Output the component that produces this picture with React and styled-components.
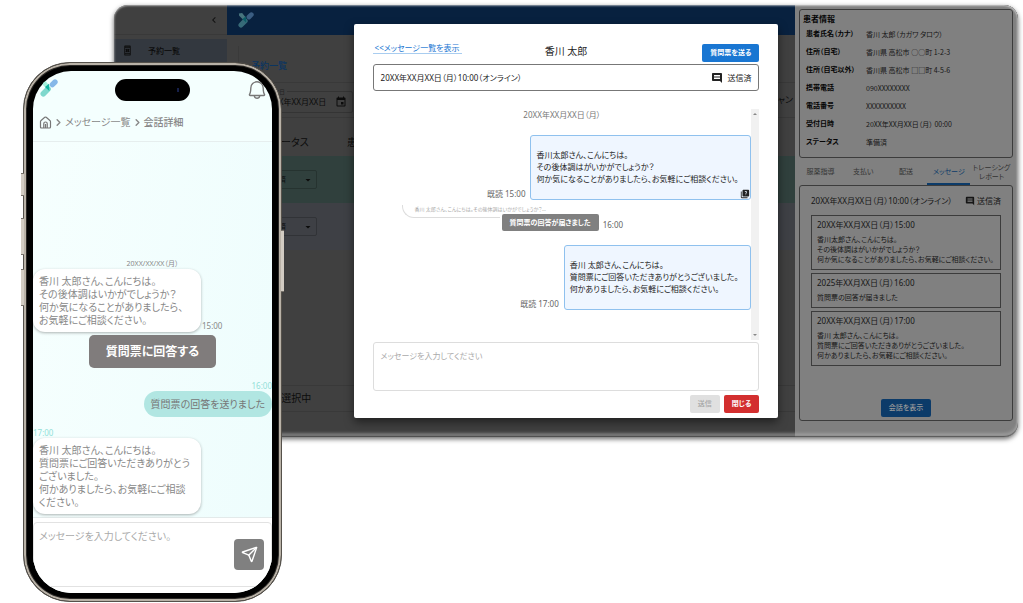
import React, { useState } from 'react'
import styled, { createGlobalStyle } from 'styled-components';
import { MdComment, MdQuiz, MdEvent, MdChevronLeft, MdOutlineBookOnline, MdArrowDropDown } from 'react-icons/md';
import { LuSend, LuChevronRight } from 'react-icons/lu';
import { PiBell } from 'react-icons/pi';


const patient = [
  ['患者氏名（カナ）', '香川 太郎（カガワ タロウ）'],
  ['住所（自宅）', '香川県 高松市 ○○町 1-2-3'],
  ['住所（自宅以外）', '香川県 高松市 □□町 4-5-6'],
  ['携帯電話', '090XXXXXXXX'],
  ['電話番号', 'XXXXXXXXXX'],
  ['受付日時', '20XX年XX月XX日（月） 00:00'],
  ['ステータス', '準備済'],
];

const tabs = ['服薬指導', '支払い', '配送', 'メッセージ', 'トレーシング レポート'];

const history = [
  {
    date: '20XX年XX月XX日（月）15:00',
    lines: ['香川太郎さん、こんにちは。', 'その後体調はがいかがでしょうか？', '何か気になることがありましたら、お気軽にご相談ください。'],
  },
  {
    date: '2025年XX月XX日（月）16:00',
    lines: ['質問票の回答が届きました'],
  },
  {
    date: '20XX年XX月XX日（月）17:00',
    lines: ['香川 太郎さん、こんにちは。', '質問票にご回答いただきありがとうございました。', '何かありましたら、お気軽にご相談ください。'],
  },
];

const Lines = ({ items }) => items.map((line) => <p key={line}>{line}</p>);

const Logo = ({ size, dim }) => (
  <svg width={size} height={size} viewBox="0 0 54 54" opacity={dim ? 0.4 : 1} aria-hidden="true">
    <path d="M3 5 L14 3 L27 19 L20 29 L4 13 Z" fill="#a5f0dc" />
    <path d="M10 44 L24 30" stroke="#7fd8cd" strokeWidth="17" strokeLinecap="round" />
    <path d="M37 17 L45 9" stroke="#86b8e8" strokeWidth="16" strokeLinecap="round" />
    <path d="M15 24 L27 14 L28 36 Z" fill="#12b5a0" />
  </svg>
);

const HomeIcon = () => (
  <svg width="13" height="13" viewBox="0 0 26 26" fill="none" stroke="#777" strokeWidth="2.4" strokeLinejoin="round" aria-hidden="true">
    <path d="M3 11.5 Q3 10 4.2 9 L11.6 2.6 Q13 1.5 14.4 2.6 L21.8 9 Q23 10 23 11.5 V22 Q23 24 21 24 H5 Q3 24 3 22 Z" />
    <path d="M9.5 24 V15.5 Q9.5 12 13 12 Q16.5 12 16.5 15.5 V24 M13 16 V24" />
  </svg>
);

const PatientPanel = () => {
  const [tab, setTab] = useState('メッセージ');

  return (
    <Panel>
      <InfoCard>
        <h2>患者情報</h2>
        <dl>
          {patient.map(([label, value]) => (
            <InfoRow key={label}>
              <dt>{label}</dt>
              <dd>{value}</dd>
            </InfoRow>
          ))}
        </dl>
      </InfoCard>
      <Tabs>
        {tabs.map((name) => (
          <Tab key={name} type="button" $active={name === tab} onClick={() => setTab(name)}>{name}</Tab>
        ))}
      </Tabs>
      <HistoryCard>
        <HistoryHead>
          <span>20XX年XX月XX日（月）10:00（オンライン）</span>
          <Sent><MdComment size={10} />送信済</Sent>
        </HistoryHead>
        {history.map((item) => (
          <HistoryItem key={item.date}>
            <h3>{item.date}</h3>
            <Lines items={item.lines} />
          </HistoryItem>
        ))}
        <ShowButton type="button">会話を表示</ShowButton>
      </HistoryCard>
    </Panel>
  );
};

const Reservations = () => (
  <Main>
    <TopBar><Logo size={16} dim /></TopBar>
    <Card>
      <Heading>予約一覧</Heading>
      <Filters>
        <DateField>
          <legend>予約日</legend>
          <span>20XX年XX月XX日</span>
          <MdEvent size={12} />
        </DateField>
        <label><input type="checkbox" />キャン</label>
      </Filters>
      <Table>
        <thead>
          <tr><th>ステータス</th><th>患者名</th></tr>
        </thead>
        <tbody>
          {['#30403d', '#3e4045'].map((color) => (
            <Row key={color} $color={color}>
              <td>
                <SelectBox>
                  <select aria-label="ステータス" defaultValue="準備済">
                    <option>準備済</option>
                    <option>未対応</option>
                  </select>
                  <MdArrowDropDown size={12} />
                </SelectBox>
              </td>
              <td />
            </Row>
          ))}
        </tbody>
      </Table>
      <Selection>0件 選択中</Selection>
    </Card>
  </Main>
);

const MessageDialog = () => {
  const [text, setText] = useState('');

  return (
    <Backdrop>
      <Dialog role="dialog" aria-label="香川 太郎">
        <DialogHead>
          <a href="#messages">&lt;&lt;メッセージ一覧を表示</a>
          <h1>香川 太郎</h1>
          <Button type="button" $color="#1976d2">質問票を送る</Button>
        </DialogHead>
        <Visit>
          <span>20XX年XX月XX日（月）10:00（オンライン）</span>
          <Sent $wide><MdComment size={12} />送信済</Sent>
        </Visit>
        <Thread>
          <Messages>
            <Day>20XX年XX月XX日（月）</Day>
            <Outgoing>
              <time>既読 15:00</time>
              <Message>
                <Lines items={history[0].lines} />
                <MdQuiz size={10} />
              </Message>
            </Outgoing>
            <Reply>
              <Preview>香川 太郎さん、こんにちは。その後体調はいかがでしょうか？...</Preview>
              <Answer type="button">質問票の回答が届きました</Answer>
              <time>16:00</time>
            </Reply>
            <Outgoing>
              <time>既読 17:00</time>
              <Message><Lines items={history[2].lines} /></Message>
            </Outgoing>
          </Messages>
          <Scrollbar aria-hidden="true"><i /><i /></Scrollbar>
        </Thread>
        <Draft
          aria-label="メッセージ"
          placeholder="メッセージを入力してください"
          value={text}
          onChange={(e) => setText(e.target.value)}
        />
        <Actions>
          <Button type="button" disabled={!text} $color="#1976d2">送信</Button>
          <Button type="button" $color="#d32f2f">閉じる</Button>
        </Actions>
      </Dialog>
    </Backdrop>
  );
};

const PhoneApp = () => (
  <Phone>
    <SideKey $side="left" $top={110} $height={23} />
    <SideKey $side="left" $top={155} $height={37} />
    <SideKey $side="left" $top={206} $height={37} />
    <SideKey $side="right" $top={167} $height={62} />
    <Screen>
      <PhoneTop>
        <Logo size={18} />
        <Island><i /></Island>
        <button type="button" aria-label="通知"><PiBell size={22} /></button>
      </PhoneTop>
      <Crumbs>
        <a href="#home" aria-label="ホーム"><HomeIcon /></a>
        <LuChevronRight size={11} strokeWidth={3} />
        <a href="#messages">メッセージ一覧</a>
        <LuChevronRight size={11} strokeWidth={3} />
        <b>会話詳細</b>
      </Crumbs>
      <Chat>
        <ChatDay>20XX/XX/XX（月）</ChatDay>
        <Incoming>
          <Bubble>
            <Lines items={['香川 太郎さん、こんにちは。', 'その後体調はいかがでしょうか？', '何か気になることがありましたら、', 'お気軽にご相談ください。']} />
          </Bubble>
          <time>15:00</time>
        </Incoming>
        <AnswerButton type="button">質問票に回答する</AnswerButton>
        <Mine>
          <Stamp>16:00</Stamp>
          <Pill>質問票の回答を送りました</Pill>
        </Mine>
        <Stamp>17:00</Stamp>
        <Incoming>
          <Bubble>
            <Lines items={['香川 太郎さん、こんにちは。', '質問票にご回答いただきありがとう', 'ございました。', '何かありましたら、お気軽にご相談', 'ください。']} />
          </Bubble>
        </Incoming>
      </Chat>
      <Composer>
        <ComposerBox>
          <textarea aria-label="メッセージ" placeholder="メッセージを入力してください。" />
          <button type="button" aria-label="送信"><LuSend size={17} /></button>
        </ComposerBox>
      </Composer>
    </Screen>
  </Phone>
);

const App = () => (
  <Stage>
    <GlobalStyle />
    <Desktop>
      <Sidebar>
        <Collapse type="button" aria-label="閉じる"><MdChevronLeft size={12} /></Collapse>
        <a href="#reservations"><MdOutlineBookOnline size={11} />予約一覧</a>
      </Sidebar>
      <Reservations />
      <PatientPanel />
      <MessageDialog />
    </Desktop>
    <PhoneApp />
  </Stage>
);

export default App


const GlobalStyle = createGlobalStyle`
  * {
    box-sizing: border-box;
  }

  body {
    margin: 0;
    background: #fff;
    font-family: "Noto Sans", "Noto Sans CJK JP", sans-serif;
    font-feature-settings: "palt";
    font-size: 8px;
    line-height: 12px;
    color: #222;
  }

  h1, h2, h3, p, dl, dd {
    margin: 0;
  }

  button, input, select, textarea {
    font: inherit;
    font-feature-settings: inherit;
    margin: 0;
    padding: 0;
  }

  svg {
    flex: none;
  }
`;

/* the phone and the desktop window share one grid row and overlap */
const Stage = styled.div`
  display: grid;
  grid-template-columns: 91px 168px 1fr;
  align-items: start;
  padding: 5px 5px 0 23px;
`;

const Desktop = styled.div`
  position: relative;
  grid-column: 2 / 4;
  grid-row: 1;
  display: grid;
  grid-template-columns: 113px 1fr 223px;
  border-radius: 14px;
  overflow: hidden;
  background: #404040;
  box-shadow: 0 2px 5px rgba(0, 0, 0, 0.6);

  &::after {
    content: '';
    position: absolute;
    inset: 0;
    border-radius: 14px;
    pointer-events: none;
    box-shadow: inset 0 1px 2px rgba(255, 255, 255, 0.5), inset 0 -1px 1px rgba(30, 30, 30, 0.6),
      inset 0 -4px 3px rgba(180, 180, 180, 0.5), inset -1px 0 2px rgba(220, 220, 220, 0.5);
  }
`;

const Sidebar = styled.nav`
  display: flex;
  flex-direction: column;

  a {
    display: flex;
    align-items: center;
    gap: 15px;
    height: 23px;
    padding-left: 8px;
    background: #33383f;
    color: #0c0c0c;
    font-weight: 500;
    text-decoration: none;
  }
`;

const Collapse = styled.button`
  display: flex;
  align-items: center;
  justify-content: flex-end;
  height: 30px;
  margin-bottom: 4px;
  padding-right: 7px;
  border: none;
  border-bottom: 1px solid #393939;
  background: none;
  color: #111;
`;

const Main = styled.main`
  display: flex;
  flex-direction: column;
  min-width: 0;
  overflow: hidden;
  color: #0c0c0c;
`;

const TopBar = styled.header`
  display: flex;
  align-items: center;
  height: 30px;
  padding-left: 11px;
  background: #08213f;
`;

const Card = styled.section`
  display: flex;
  flex-direction: column;
  flex: 1;
  margin: 11px 0 0 11px;
  border-left: 1px solid #3a3a3a;
`;

const Heading = styled.h2`
  height: 37px;
  padding: 0 12px;
  border-bottom: 1px solid #393939;
  color: #0b3561;
  font-size: 9px;
  font-weight: 500;
  line-height: 40px;
`;

const Filters = styled.div`
  display: flex;
  align-items: center;
  justify-content: space-between;
  height: 35px;
  padding-left: 16px;
  border-bottom: 1px solid #393939;
  white-space: nowrap;

  label {
    display: flex;
    align-items: center;
    gap: 4px;
    padding-right: 2px;
    font-size: 9px;
  }
`;

const DateField = styled.fieldset`
  display: flex;
  align-items: center;
  justify-content: space-between;
  width: 98px;
  margin: 0;
  padding: 0 5px 4px 9px;
  border: 1px solid #343434;
  border-radius: 2px;

  legend {
    padding: 0 2px;
    color: #222;
    font-size: 6px;
    line-height: 8px;
  }
`;

const Table = styled.table`
  width: 100%;
  border-collapse: collapse;
  table-layout: fixed;

  th {
    height: 38px;
    padding: 10px 0 0;
    padding-left: 24px;
    font-size: 10px;
    font-weight: 400;
    text-align: left;
  }

  th:first-child {
    width: 84px;
  }

  td {
    height: 47px;
    padding: 0 0 0 20px;
  }
`;

const Row = styled.tr`
  background: ${(props) => props.$color};
`;

const SelectBox = styled.div`
  display: flex;
  align-items: center;
  width: 58px;
  height: 19px;
  padding: 0 2px 0 5px;
  border: 1px solid rgba(0, 0, 0, 0.2);
  border-radius: 2px;

  select {
    flex: 1;
    min-width: 0;
    border: none;
    background: none;
    color: #0c0c0c;
    appearance: none;
    font-size: 7px;
  }
`;

const Selection = styled.div`
  margin-top: auto;
  margin-bottom: 25px;
  padding-left: 24px;
  border: solid #393939;
  border-width: 1px 0;
  font-size: 10px;
  line-height: 25px;
`;

const Panel = styled.aside`
  padding: 4px 5px 16px 4px;
  background: #808080;
  color: #161616;
`;

const InfoCard = styled.section`
  padding: 3px;
  border: 1px solid #3c3c3c;
  border-radius: 3px;

  h2 {
    font-size: 8px;
    line-height: 12px;
    color: #050505;
  }

  dl {
    padding: 0 3px 3px;
  }
`;

const InfoRow = styled.div`
  display: grid;
  grid-template-columns: 60px 1fr;
  font-size: 7px;
  line-height: 18px;

  dt {
    font-weight: 700;
    color: #050505;
  }

  dd {
    font-family: "Noto Sans CJK JP", "Noto Sans", sans-serif;
  }
`;

const Tabs = styled.div`
  display: flex;
  height: 27px;
  padding-top: 2px;
`;

const Tab = styled.button`
  flex: 1 1 0;
  min-width: 0;
  border: none;
  border-bottom: 2px solid ${(props) => (props.$active ? '#0c3b69' : 'transparent')};
  background: none;
  color: ${(props) => (props.$active ? '#0c3b69' : '#333')};
  font-size: 7px;
  line-height: 9px;
`;

const HistoryCard = styled.section`
  display: flex;
  flex-direction: column;
  gap: 3px;
  padding: 9px 11px 3px;
  border: 1px solid #3c3c3c;
  border-radius: 3px;
`;

const HistoryHead = styled.div`
  display: flex;
  justify-content: space-between;
  margin-bottom: 5px;
  white-space: nowrap;
`;

const Sent = styled.span`
  display: flex;
  align-items: center;
  gap: ${(props) => (props.$wide ? '4px' : '2px')};
`;

const HistoryItem = styled.article`
  padding: 4px 5px;
  border: 1px solid #3c3c3c;
  font-size: 7px;
  line-height: 10px;
  white-space: nowrap;

  h3 {
    margin-bottom: 5px;
    font-size: 8px;
    font-weight: 400;
  }
`;

const Button = styled.button`
  height: 18px;
  padding: 0 8px;
  border: none;
  border-radius: 2px;
  background: ${(props) => props.$color};
  color: #fff;
  font-size: 7px;
  font-weight: 700;
  line-height: 18px;

  &:disabled {
    background: #e0e0e0;
    color: #a6a6a6;
    font-weight: 500;
  }
`;

const ShowButton = styled(Button)`
  align-self: center;
  margin-top: 30px;
  background: #0c3b69;
  color: #9a9a9a;
  font-weight: 500;
`;

const Backdrop = styled.div`
  position: absolute;
  inset: 0;
  display: flex;
  align-items: center;
  justify-content: center;
`;

const Dialog = styled.div`
  width: 47%;
  padding: 19px 19px 5px;
  border-radius: 2px;
  background: #fff;
  box-shadow: 0 4px 10px rgba(0, 0, 0, 0.5);
`;

const DialogHead = styled.header`
  display: grid;
  grid-template-columns: 1fr auto 1fr;
  align-items: center;
  height: 18px;
  margin-bottom: 3px;

  a {
    justify-self: start;
    padding: 0 2px;
    margin-bottom: 8px;
    border-bottom: 1px solid #a9cdf0;
    color: #1976d2;
    text-decoration: none;
    line-height: 10px;
  }

  h1 {
    margin-bottom: 4px;
    font-size: 10px;
    font-weight: 400;
  }

  button {
    justify-self: end;
  }
`;

const Visit = styled.div`
  display: flex;
  align-items: center;
  justify-content: space-between;
  height: 27px;
  padding: 0 7px;
  border: 1px solid #777;
  border-radius: 3px;
`;

const Thread = styled.div`
  display: flex;
  margin-top: 18px;
`;

const Messages = styled.div`
  display: flex;
  flex: 1;
  flex-direction: column;
  padding-bottom: 30px;

  time {
    color: #666;
  }
`;

const Day = styled.p`
  margin-bottom: 14px;
  color: #777;
  text-align: center;
`;

const Outgoing = styled.div`
  display: flex;
  align-items: flex-end;
  justify-content: flex-end;
  gap: 5px;
`;

const Message = styled.div`
  position: relative;
  padding: 13px 12px 14px 5px;
  border: 1px solid #8fc1ee;
  border-radius: 3px;
  background: #eff6ff;

  svg {
    position: absolute;
    right: 0;
    bottom: 0;
  }
`;

const Reply = styled.div`
  display: grid;
  grid-template-columns: 98px auto 1fr;
  align-items: end;
  column-gap: 2px;
  padding: 5px 0 14px 29px;

  time {
    padding-left: 2px;
  }
`;

const Preview = styled.p`
  grid-column: 1 / 3;
  grid-row: 1;
  align-self: start;
  height: 13px;
  width: 98px;
  padding-left: 12px;
  border: solid #ddd;
  border-width: 0 0 1px 1px;
  border-radius: 0 0 0 12px;
  color: #aaa;
  font-size: 5px;
  line-height: 8px;
  white-space: nowrap;
`;

const Answer = styled.button`
  grid-column: 2;
  grid-row: 1;
  height: 17px;
  margin-top: 9px;
  padding: 0 8px;
  border: none;
  border-radius: 2px;
  background: #808080;
  color: #fff;
  font-size: 7px;
  font-weight: 700;
  line-height: 17px;
`;

const Scrollbar = styled.div`
  display: flex;
  flex-direction: column;
  align-items: center;
  justify-content: space-between;
  width: 8px;
  padding: 4px 0;
  background: #f1f1f1;

  i {
    border: 2px solid transparent;
    border-top: none;
    border-bottom-color: #888;
  }

  i:last-child {
    border-top: 2px solid #888;
    border-bottom: none;
  }
`;

const Draft = styled.textarea`
  display: block;
  width: 100%;
  height: 49px;
  margin: 2px 0 4px;
  padding: 7px;
  border: 1px solid #ddd;
  border-radius: 3px;
  outline: none;
  resize: none;

  &::placeholder {
    color: #aaa;
  }
`;

const Actions = styled.div`
  display: flex;
  justify-content: flex-end;
  gap: 4px;
`;

const Phone = styled.div`
  position: relative;
  grid-column: 1 / 3;
  grid-row: 1;
  margin-top: 57px;
  padding: 8px 9px;
  border: 1px solid #55514b;
  border-radius: 47px;
  background: #000;
  box-shadow: inset 0 0 0 2px #b9b2a7, inset 0 0 0 3px #2a2826;
  font-size: 10px;
  line-height: 13px;
  color: #888;
`;

const SideKey = styled.span`
  position: absolute;
  top: ${(props) => props.$top}px;
  ${(props) => props.$side}: -3px;
  width: 3px;
  height: ${(props) => props.$height}px;
  border: solid #77726b;
  border-width: 1px 0;
  background: #d2ccc3;
`;

const Screen = styled.div`
  border-radius: 38px;
  overflow: hidden;
  background: #f4fffe;
`;

const PhoneTop = styled.header`
  display: grid;
  grid-template-columns: 1fr auto 1fr;
  height: 32px;
  padding: 8px 4px 0;

  > svg {
    margin-left: 3px;
  }

  button {
    display: flex;
    justify-self: end;
    height: 22px;
    border: none;
    background: none;
    color: #777;
  }
`;

const Island = styled.div`
  display: flex;
  align-items: center;
  justify-content: flex-end;
  width: 75px;
  height: 22px;
  padding-right: 11px;
  border-radius: 11px;
  background: #000;

  i {
    width: 2px;
    height: 4px;
    background: #16204a;
  }
`;

const Crumbs = styled.nav`
  display: flex;
  align-items: center;
  gap: 1px;
  height: 39px;
  padding-left: 6px;
  border-bottom: 1px solid #e6eeee;

  a {
    display: flex;
    color: #888;
    text-decoration: none;
  }

  b {
    font-weight: 500;
  }
`;

const Chat = styled.div`
  display: flex;
  flex-direction: column;
  justify-content: flex-end;
  min-height: 375px;
  padding-bottom: 3px;
  background: linear-gradient(100deg, #f6fffe, #eefdfd);
`;

const ChatDay = styled.p`
  font-size: 7px;
  line-height: 10px;
  text-align: center;
`;

const Incoming = styled.div`
  display: flex;
  align-items: flex-end;

  time {
    padding-left: 1px;
    font-size: 8px;
    line-height: 12px;
  }
`;

const Bubble = styled.div`
  width: 168px;
  padding: 6px 6px 5px;
  border-radius: 12px;
  background: #fff;
  box-shadow: 0 1px 3px rgba(0, 0, 0, 0.3);
  white-space: nowrap;
`;

const AnswerButton = styled.button`
  align-self: center;
  height: 33px;
  margin: 3px 0 13px;
  padding: 0 17px;
  border: none;
  border-radius: 5px;
  background: #807c7c;
  color: #fff;
  font-size: 12px;
  font-weight: 700;
`;

const Mine = styled.div`
  display: flex;
  flex-direction: column;
  align-items: flex-end;
  margin-bottom: 11px;
`;

const Stamp = styled.time`
  color: #93dfd8;
  font-size: 8px;
  line-height: 10px;
`;

const Pill = styled.p`
  padding: 0 7px;
  border-radius: 13px;
  background: #b1e6e2;
  color: #777;
  line-height: 26px;
`;

const Composer = styled.footer`
  padding: 4px 0 6px;
  border-top: 1px solid #e3eaea;
  background: #fff;
`;

const ComposerBox = styled.div`
  display: flex;
  align-items: center;
  height: 65px;
  padding-right: 7px;
  border: 1px solid #e2e2e2;
  border-radius: 4px;

  textarea {
    flex: 1;
    min-width: 0;
    height: 100%;
    padding: 7px 5px;
    border: none;
    outline: none;
    resize: none;
    background: none;
  }

  textarea::placeholder {
    color: #aaa;
  }

  button {
    display: flex;
    align-items: center;
    justify-content: center;
    width: 30px;
    height: 31px;
    border: none;
    border-radius: 4px;
    background: #808080;
    color: #fff;
  }
`;
